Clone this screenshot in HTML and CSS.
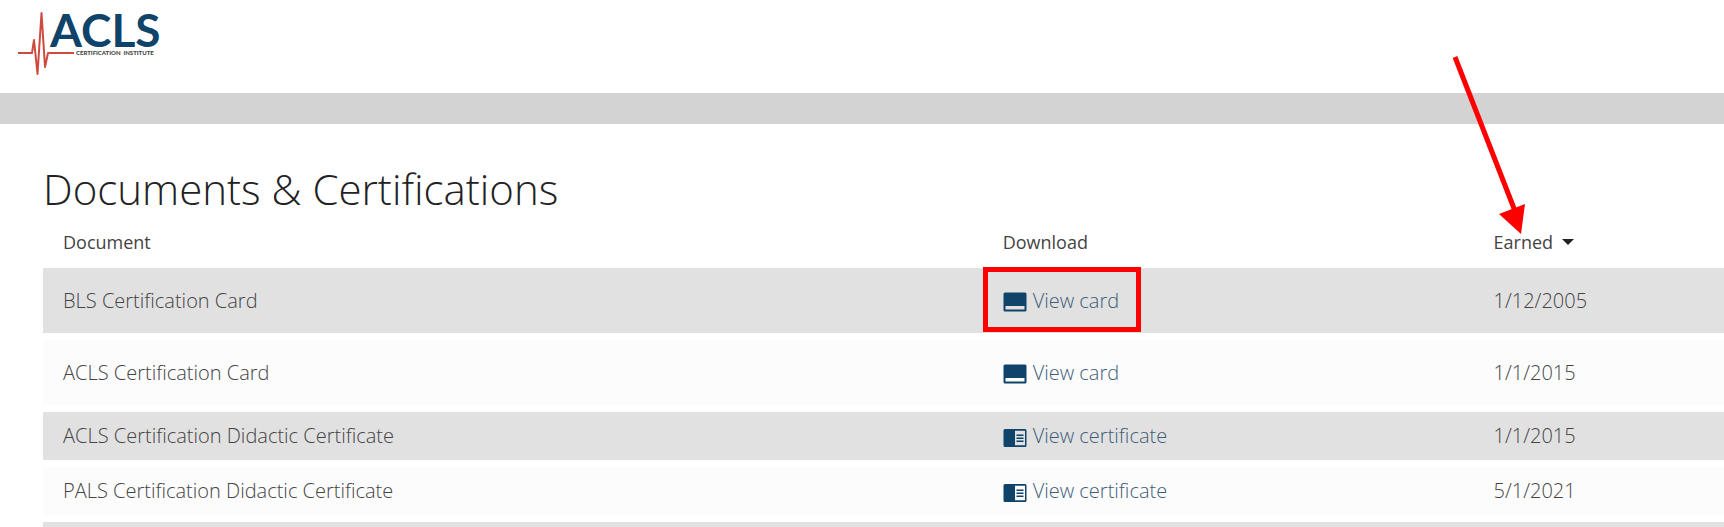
FILE: index.html
```html
<!DOCTYPE html>
<html lang="en">
<head>
  <meta charset="UTF-8">
  <meta name="viewport" content="width=device-width, initial-scale=1.0">
  <title>Documents &amp; Certifications</title>
  <link rel="stylesheet" href="styles.css">
</head>
<body>
  <svg class="icon-defs" width="0" height="0" aria-hidden="true">
    <symbol id="icon-card" viewBox="0 0 24 20">
      <path fill-rule="evenodd" d="M2 .5h20a1.500 1.500 0 0 1 1.500 1.500v16a1.500 1.500 0 0 1-1.500 1.500H2a1.500 1.500 0 0 1-1.500-1.500V2A1.500 1.500 0 0 1 2 .5zM2.500 14v3.500h19V14z"/>
    </symbol>
    <symbol id="icon-certificate" viewBox="0 0 24 20">
      <path fill-rule="evenodd" d="M2 1h20a1.500 1.500 0 0 1 1.500 1.500v15a1.500 1.500 0 0 1-1.500 1.500H2a1.500 1.500 0 0 1-1.500-1.500v-15A1.500 1.500 0 0 1 2 1zM12 2.700v14.600h10V2.700z"/>
      <path d="M13.500 6.500h7V8h-7zM13.500 9.500h7V11h-7zM13.500 12.500h7V14h-7z"/>
    </symbol>
  </svg>

  <header class="site-header">
    <a href="#" class="logo" aria-label="ACLS Certification Institute">
      <svg width="150" height="76" viewBox="0 0 150 76">
        <path class="logo-pulse" d="M0 53h14l2-13 3.500 34L23.500 13l3.500 54 3-14h26"/>
        <text class="logo-name" x="32" y="47">ACLS</text>
        <text class="logo-sub" x="58" y="55">CERTIFICATION &#160;INSTITUTE</text>
      </svg>
    </a>
  </header>
  <div class="divider-bar"></div>

  <main class="content">
    <h1>Documents &amp; Certifications</h1>
    <table class="documents">
      <thead>
        <tr>
          <th class="col-document">Document</th>
          <th class="col-download">Download</th>
          <th class="col-earned">
            <button type="button" class="sort-btn">Earned <span class="caret"></span></button>
            <svg class="arrow" width="80" height="182" viewBox="0 0 80 182" aria-hidden="true">
              <path d="M5 4l60 154" stroke="#f00" stroke-width="5"/>
              <path d="M49 161l26-10-4 30z" fill="#f00"/>
            </svg>
          </th>
        </tr>
      </thead>
      <tbody>
        <tr class="card-row">
          <td>BLS Certification Card</td>
          <td class="highlight"><a href="#"><svg class="icon"><use href="#icon-card"/></svg>View card</a></td>
          <td>1/12/2005</td>
        </tr>
        <tr class="card-row">
          <td>ACLS Certification Card</td>
          <td><a href="#"><svg class="icon"><use href="#icon-card"/></svg>View card</a></td>
          <td>1/1/2015</td>
        </tr>
        <tr>
          <td>ACLS Certification Didactic Certificate</td>
          <td><a href="#"><svg class="icon"><use href="#icon-certificate"/></svg>View certificate</a></td>
          <td>1/1/2015</td>
        </tr>
        <tr>
          <td>PALS Certification Didactic Certificate</td>
          <td><a href="#"><svg class="icon"><use href="#icon-certificate"/></svg>View certificate</a></td>
          <td>5/1/2021</td>
        </tr>
        <tr>
          <td></td>
          <td></td>
          <td></td>
        </tr>
      </tbody>
    </table>
  </main>
</body>
</html>
```
FILE: styles.css
```css
html {
  overflow: hidden;
}

body {
  margin: 0;
  height: 100vh;
  overflow: hidden;
  background: #fff;
  color: #444;
  font-family: 'Open Sans', sans-serif;
  font-size: 20px;
  font-weight: 300;
}

.icon-defs {
  position: absolute;
}

.site-header {
  padding: 0 18px 17px;
}

.logo,
.logo svg {
  display: block;
  overflow: visible;
}

.logo {
  width: 150px;
}

.logo-pulse {
  fill: none;
  stroke: #d0493f;
  stroke-width: 2;
  stroke-linejoin: round;
}

.logo-name {
  font-family: Lato, sans-serif;
  font-size: 46px;
  font-weight: 700;
  fill: #0f4369;
}

.logo-sub {
  font-family: Lato, sans-serif;
  font-size: 6px;
  font-weight: 900;
  fill: #444;
}

.divider-bar {
  height: 31px;
  background: #d3d3d3;
}

.content {
  padding: 35px 0 0 43px;
}

h1 {
  margin: 0;
  font-size: 42px;
  font-weight: 300;
  line-height: 60px;
  color: #222;
}

.documents {
  width: 100%;
  table-layout: fixed;
  border-collapse: separate;
  border-spacing: 0 7px;
}

.documents th,
.documents td {
  box-sizing: border-box;
  padding: 0 20px;
  text-align: left;
}

.documents th {
  height: 35px;
  padding-bottom: 4px;
  font-size: 18px;
  font-weight: 400;
}

.documents .col-document {
  width: 55.9%;
}

.documents .col-download {
  width: 29.2%;
}

.documents .col-earned {
  position: relative;
}

.documents td {
  height: 48px;
  line-height: 30px;
  background: #fcfcfc;
}

.documents .card-row td {
  height: 65px;
}

.documents tbody tr:nth-child(odd) td {
  background: #e1e1e1;
}

.documents a {
  display: flex;
  align-items: center;
  gap: 6px;
  color: #3f5d78;
  text-decoration: none;
}

.icon {
  width: 24px;
  height: 20px;
  margin-top: 3px;
  fill: #0f4369;
}

.sort-btn {
  display: flex;
  align-items: center;
  gap: 9px;
  padding: 0;
  border: none;
  background: none;
  color: inherit;
  font: inherit;
  cursor: pointer;
}

.caret {
  border: 6px solid transparent;
  border-top-color: #222;
  border-bottom: none;
}

/* Callouts drawn over the table */
.arrow {
  position: absolute;
  left: -24px;
  bottom: 26px;
  fill: none;
  pointer-events: none;
}

.highlight {
  position: relative;
}

.highlight::after {
  content: '';
  position: absolute;
  top: -1px;
  left: 0;
  width: 158px;
  height: 100%;
  box-sizing: border-box;
  border: 5px solid #f00;
  pointer-events: none;
}
```
